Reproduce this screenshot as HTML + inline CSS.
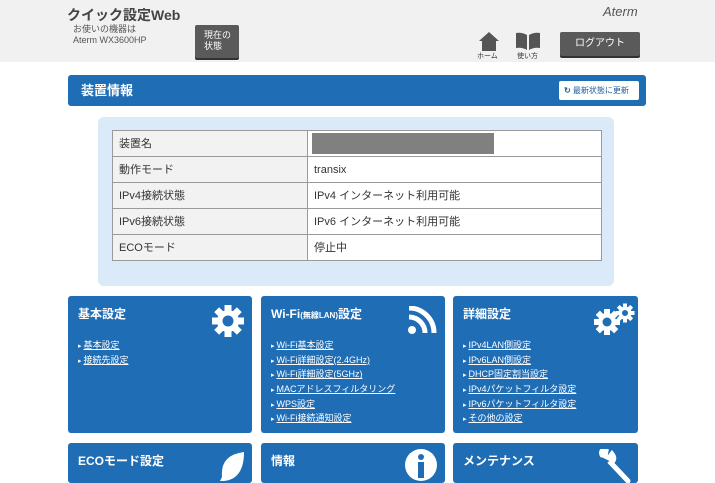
<!DOCTYPE html>
<html><head><meta charset="utf-8"><style>
*{margin:0;padding:0;box-sizing:border-box}
body{width:715px;height:477px;overflow:hidden;background:#fff;font-family:"Liberation Sans","Noto Sans CJK JP",sans-serif;position:relative}
.hdr{position:absolute;left:0;top:0;width:715px;height:62px;background:#f1f1f1}
.abs{position:absolute}
.btn{position:absolute;background:#5a5a5a;color:#fff;border-radius:2px;box-shadow:0 2px 0 #333}
.bar{position:absolute;left:68px;top:75px;width:578px;height:31px;background:#1f6db5;border-radius:3px}
.panel{position:absolute;left:98px;top:117px;width:516px;height:169px;background:#dbeaf8;border-radius:6px}
table{position:absolute;left:112px;top:130px;width:490px;border-collapse:collapse;font-size:11px;color:#333}
td{border:1px solid #9a9a9a;height:26px;padding-left:6px;background:#fff;line-height:14px}
td.l{background:#f2f2f2;width:195px}
.card{position:absolute;background:#1f6db5;border-radius:3px;color:#fff}
.card h3{position:absolute;left:10px;top:10px;font-size:12px;font-weight:bold;line-height:16px}
.card ul{position:absolute;left:10px;top:43px;list-style:none;font-size:9px}
.card li{height:14.7px;line-height:12px;white-space:nowrap}
.card li:before{content:"▸ ";font-size:7px}
.card li span{text-decoration:underline}
</style></head><body>
<div class="hdr"></div>
<div class="abs" style="left:67px;top:6px;font-size:14px;font-weight:bold;color:#444;line-height:18px">クイック設定Web</div>
<div class="abs" style="left:73px;top:24px;font-size:9px;color:#555;line-height:11px">お使いの機器は<br>Aterm WX3600HP</div>
<div class="btn" style="left:195px;top:25px;width:44px;height:33px;font-size:9px;padding:5px 0 0 9px;line-height:11px">現在の<br>状態</div>
<div class="abs" style="left:603px;top:4px;font-size:13px;font-style:italic;color:#555">Aterm</div>
<svg class="abs" style="left:478px;top:31px" width="22" height="20"><path d="M11 1 L21 10 H18 V20 H4 V10 H1Z" fill="#555"/></svg>
<div class="abs" style="left:477px;top:51px;font-size:7px;color:#333">ホーム</div>
<svg class="abs" style="left:515px;top:32px" width="26" height="18"><path d="M1 1 Q7 0 12 3 V18 Q7 15 1 16Z M14 3 Q19 0 25 1 V16 Q19 15 14 18Z" fill="#555"/></svg>
<div class="abs" style="left:517px;top:51px;font-size:7px;color:#333">使い方</div>
<div class="btn" style="left:560px;top:32px;width:80px;height:24px;font-size:10px;text-align:center;line-height:24px">ログアウト</div>
<div class="bar"><div class="abs" style="left:13px;top:7px;color:#fff;font-size:13px;font-weight:bold;line-height:17px">装置情報</div>
<div class="abs" style="left:491px;top:6px;width:80px;height:19px;background:#fff;border-radius:2px;font-size:8px;color:#1f5fa0;line-height:19px;padding-left:5px"><b>↻</b> 最新状態に更新</div></div>
<div class="panel"></div>
<table>
<tr><td class="l">装置名</td><td><div style="width:182px;height:21px;background:#808080;margin-left:-2px"></div></td></tr>
<tr><td class="l">動作モード</td><td>transix</td></tr>
<tr><td class="l">IPv4接続状態</td><td>IPv4 インターネット利用可能</td></tr>
<tr><td class="l">IPv6接続状態</td><td>IPv6 インターネット利用可能</td></tr>
<tr><td class="l">ECOモード</td><td>停止中</td></tr>
</table>
<div class="card" style="left:68px;top:296px;width:184px;height:137px"><h3>基本設定</h3>
<svg class="abs" style="left:144px;top:9px" width="32" height="32" viewBox="-16 -16 32 32"><g fill="#fff"><circle r="11"/><rect x="-3.5" y="-16" width="7" height="32"/><rect x="-16" y="-3.5" width="32" height="7"/><rect x="-3.5" y="-16" width="7" height="32" transform="rotate(45)"/><rect x="-3.5" y="-16" width="7" height="32" transform="rotate(-45)"/></g><circle r="5.5" fill="#1f6db5"/></svg>
<ul><li><span>基本設定</span></li><li><span>接続先設定</span></li></ul></div>
<div class="card" style="left:261px;top:296px;width:184px;height:137px"><h3>Wi-Fi<span style="font-size:8px">(無線LAN)</span>設定</h3>
<svg class="abs" style="left:146px;top:10px" width="30" height="28"><g fill="none" stroke="#fff" stroke-width="5"><path d="M2 11 A16 16 0 0 1 18 27"/><path d="M2 2 A25 25 0 0 1 27 27"/></g><circle cx="5" cy="24" r="4" fill="#fff"/></svg>
<ul><li><span>Wi-Fi基本設定</span></li><li><span>Wi-Fi詳細設定(2.4GHz)</span></li><li><span>Wi-Fi詳細設定(5GHz)</span></li><li><span>MACアドレスフィルタリング</span></li><li><span>WPS設定</span></li><li><span>Wi-Fi接続通知設定</span></li></ul></div>
<div class="card" style="left:453px;top:296px;width:185px;height:137px"><h3>詳細設定</h3>
<svg class="abs" style="left:140px;top:7px" width="42" height="32"><g transform="translate(14,19)"><g fill="#fff"><circle r="9"/><rect x="-3" y="-13" width="6" height="26"/><rect x="-13" y="-3" width="26" height="6"/><rect x="-3" y="-13" width="6" height="26" transform="rotate(45)"/><rect x="-3" y="-13" width="6" height="26" transform="rotate(-45)"/></g><circle r="4.5" fill="#1f6db5"/></g><g transform="translate(32,10)"><g fill="#fff"><circle r="6.5"/><rect x="-2" y="-9.5" width="4" height="19"/><rect x="-9.5" y="-2" width="19" height="4"/><rect x="-2" y="-9.5" width="4" height="19" transform="rotate(45)"/><rect x="-2" y="-9.5" width="4" height="19" transform="rotate(-45)"/></g><circle r="3" fill="#1f6db5"/></g></svg>
<ul><li><span>IPv4LAN側設定</span></li><li><span>IPv6LAN側設定</span></li><li><span>DHCP固定割当設定</span></li><li><span>IPv4パケットフィルタ設定</span></li><li><span>IPv6パケットフィルタ設定</span></li><li><span>その他の設定</span></li></ul></div>
<div class="card" style="left:68px;top:443px;width:184px;height:40px"><h3>ECOモード設定</h3>
<svg class="abs" style="left:148px;top:8px" width="30" height="30"><path d="M28 1 Q4 4 6 26 L3 32 L8 30 Q28 28 28 1Z" fill="#fff"/></svg></div>
<div class="card" style="left:261px;top:443px;width:184px;height:40px"><h3>情報</h3>
<svg class="abs" style="left:144px;top:6px" width="32" height="32"><circle cx="16" cy="16" r="16" fill="#fff"/><circle cx="16" cy="8" r="3" fill="#1f6db5"/><rect x="13" y="13" width="6" height="16" fill="#1f6db5"/></svg></div>
<div class="card" style="left:453px;top:443px;width:185px;height:40px"><h3>メンテナンス</h3>
<svg class="abs" style="left:145px;top:6px" width="34" height="34"><path d="M4 6 Q2 0 8 2 L7 7 L11 9 L14 5 Q18 10 13 14 L30 32" stroke="#fff" stroke-width="5" fill="none" stroke-linecap="round"/></svg></div>
</body></html>
